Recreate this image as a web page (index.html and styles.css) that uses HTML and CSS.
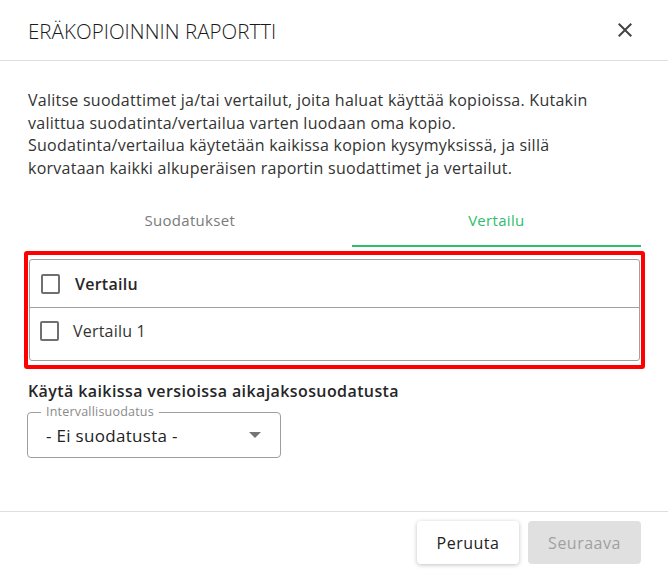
FILE: index.html
```html
<!DOCTYPE html>
<html lang="fi">
<head>
<meta charset="utf-8">
<link rel="stylesheet" href="styles.css">
</head>
<body>
<div class="dialog">
  <header class="dialog-header">
    <h1 class="title">ERÄKOPIOINNIN RAPORTTI</h1>
    <button class="close" aria-label="Sulje">
      <svg viewBox="0 0 24 24" width="24" height="24"><path d="M19 6.41 17.59 5 12 10.59 6.41 5 5 6.41 10.59 12 5 17.59 6.41 19 12 13.41 17.59 19 19 17.59 13.41 12z"/></svg>
    </button>
  </header>
  <main class="dialog-body">
    <p class="intro">Valitse suodattimet ja/tai vertailut, joita haluat käyttää kopioissa. Kutakin<br>valittua suodatinta/vertailua varten luodaan oma kopio.<br>Suodatinta/vertailua käytetään kaikissa kopion kysymyksissä, ja sillä<br>korvataan kaikki alkuperäisen raportin suodattimet ja vertailut.</p>
    <div class="tabs">
      <div class="tab">Suodatukset</div>
      <div class="tab active">Vertailu</div>
    </div>
    <div class="list-wrap">
      <div class="list">
        <label class="row header-row"><span class="checkbox"></span><span class="row-label bold">Vertailu</span></label>
        <label class="row"><span class="checkbox"></span><span class="row-label">Vertailu 1</span></label>
      </div>
    </div>
    <h2 class="subhead">Käytä kaikissa versioissa aikajaksosuodatusta</h2>
    <div class="select">
      <span class="select-label">Intervallisuodatus</span>
      <span class="select-value">- Ei suodatusta -</span>
      <span class="arrow"></span>
    </div>
  </main>
  <footer class="dialog-footer">
    <button class="btn btn-cancel">Peruuta</button>
    <button class="btn btn-next" disabled>Seuraava</button>
  </footer>
</div>
</body>
</html>
```

FILE: styles.css
```css
* { box-sizing: border-box; }
html, body { margin: 0; padding: 0; background: #fff; }
body { font-family: "Open Sans", "Noto Sans", sans-serif; color: #222; }

.dialog { width: 668px; height: 572px; display: flex; flex-direction: column; }

.dialog-header {
  height: 61px;
  border-bottom: 1px solid #dedede;
  display: flex;
  align-items: center;
  justify-content: space-between;
  padding: 0 31px 0 28px;
}
.title { margin: 0; font-size: 20.5px; font-weight: 300; letter-spacing: 0.05px; color: #1a1a1a; padding-top: 2px; }
.close { border: 0; background: none; padding: 0; width: 24px; height: 24px; display: flex; }
.close svg { fill: #444; width: 24px; height: 24px; }

.dialog-body { flex: 1; padding: 0 27px 0 28px; }

.intro { margin: 28px 0 0; font-size: 16px; letter-spacing: 0.25px; line-height: 22.5px; color: #333; white-space: nowrap; }

.tabs { display: flex; margin-top: 19px; }
.tab {
  flex: 1 1 auto;
  height: 49px;
  display: flex;
  align-items: center;
  justify-content: center;
  font-size: 15px;
  letter-spacing: 0.3px;
  color: #7a7a7a;
  border-bottom: 2px solid transparent;
  padding-bottom: 4px;
}
.tab.active { color: #2ebd6c; border-bottom-color: #2ebd6c; }

.list-wrap { position: relative; margin: 12px 1px 0 1px; }
.list-wrap::after {
  content: "";
  position: absolute;
  top: -8px; bottom: -8px; left: -5px; right: -5px;
  border: 4px solid #ff0000;
  border-radius: 3px;
  pointer-events: none;
}
.list { border: 1px solid #a0a0a0; border-radius: 3px; }
.row {
  display: flex;
  align-items: center;
  height: 48px;
  padding-left: 10px;
  gap: 15px;
}
.header-row { border-bottom: 1px solid #a0a0a0; padding-left: 11px; }
.row + .row { height: 52px; padding-bottom: 11px; padding-top: 4px; gap: 14px; }
.checkbox { width: 19px; height: 20px; border: 2px solid #707070; border-radius: 2px; }
.row-label { font-size: 16px; letter-spacing: 0.2px; color: #333; }
.row-label.bold { font-weight: 600; color: #262626; letter-spacing: 0.25px; }

.subhead { margin: 20px 0 0; font-size: 16px; letter-spacing: 0.4px; font-weight: 600; color: #262626; line-height: 20px; }

.select {
  position: relative;
  margin-top: 11px;
  margin-left: -1px;
  width: 254px;
  height: 46px;
  border: 1px solid #9e9e9e;
  border-radius: 4px;
  display: flex;
  align-items: center;
  padding: 0 18px;
}
.select-label {
  position: absolute;
  top: -9px;
  left: 13px;
  padding: 0 5px;
  background: #fff;
  font-size: 12.5px;
  letter-spacing: 0.2px;
  color: #8a8a8a;
  line-height: 16px;
}
.select-value { font-size: 17px; letter-spacing: 0.3px; color: #222; flex: 1; padding-top: 1px; }
.arrow {
  width: 0; height: 0;
  border-left: 6px solid transparent;
  border-right: 6px solid transparent;
  border-top: 6px solid #757575;
  margin-right: 1px;
}

.dialog-footer {
  height: 61px;
  border-top: 1px solid #dedede;
  display: flex;
  justify-content: flex-end;
  align-items: flex-start;
  gap: 9px;
  padding: 9px 27px 0 0;
}
.btn {
  height: 43px;
  border: 0;
  border-radius: 4px;
  font-family: inherit;
  font-size: 16px;
  letter-spacing: 0.5px;
  padding: 0;
}
.btn-cancel {
  width: 102px;
  background: #fff;
  color: #222;
  box-shadow: 0 1px 4px rgba(0,0,0,0.25);
}
.btn-next { width: 113px; background: #e0e0e0; color: #a0a0a0; }
```
